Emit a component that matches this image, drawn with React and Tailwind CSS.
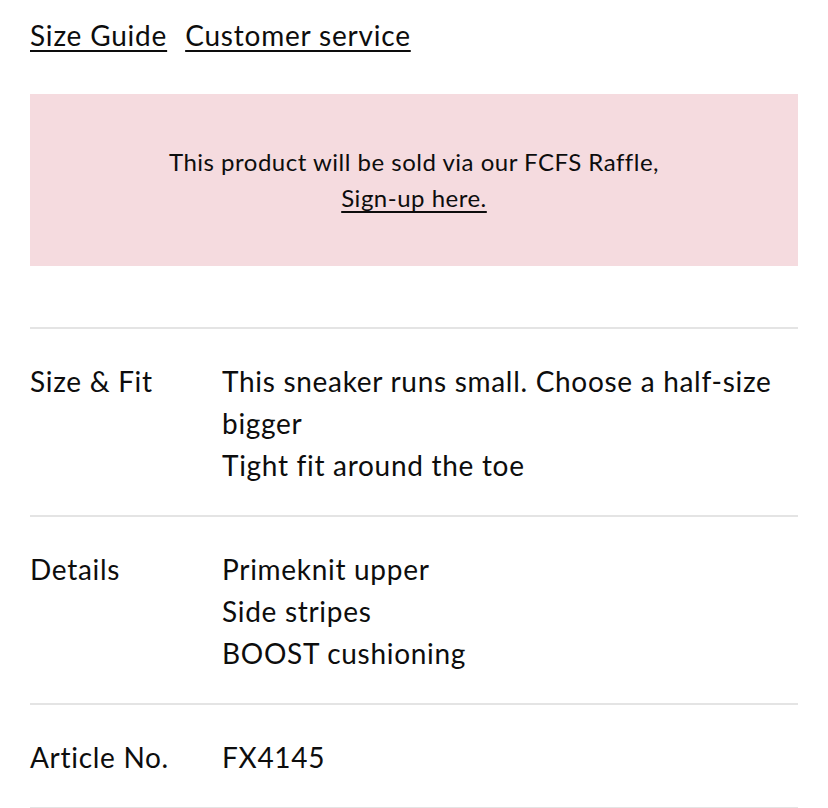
import React from 'react';

const specs = [
  { label: 'Size & Fit', lines: ['This sneaker runs small. Choose a half-size bigger', 'Tight fit around the toe'] },
  { label: 'Details', lines: ['Primeknit upper', 'Side stripes', 'BOOST cushioning'] },
  { label: 'Article No.', lines: ['FX4145'] },
];

const App = () => {
  return (
    <div className="min-h-screen bg-white px-[30px] text-[#0d0d0d] font-['Lato',sans-serif]">
      {/* Help links */}
      <div className="flex gap-[18px] pt-[16px] text-[28px] leading-[38px] tracking-[0.8px]">
        <a href="#" className="underline underline-offset-[4px] decoration-[2px]">Size Guide</a>
        <a href="#" className="underline underline-offset-[4px] decoration-[2px]">Customer service</a>
      </div>

      {/* Raffle notice */}
      <div className="mt-[40px] h-[172px] bg-[#f5dbdf] flex flex-col items-center justify-center text-center text-[24px] leading-[36px] tracking-[0.5px]">
        <p>This product will be sold via our FCFS Raffle,</p>
        <a href="#" className="underline underline-offset-[4px]">Sign-up here.</a>
      </div>

      {/* Product specs */}
      <div className="mt-[61px] border-t-2 border-[#e4e4e4]">
        {specs.map((spec) => (
          <div key={spec.label} className="flex border-b-2 border-[#e4e4e4] pt-[31px] pb-[29px] text-[28px] leading-[42px] tracking-[0.7px]">
            <div className="w-[192px] shrink-0">{spec.label}</div>
            <div className="flex-1">
              {spec.lines.map((line) => (
                <p key={line}>{line}</p>
              ))}
            </div>
          </div>
        ))}
      </div>
    </div>
  );
};

export default App;
